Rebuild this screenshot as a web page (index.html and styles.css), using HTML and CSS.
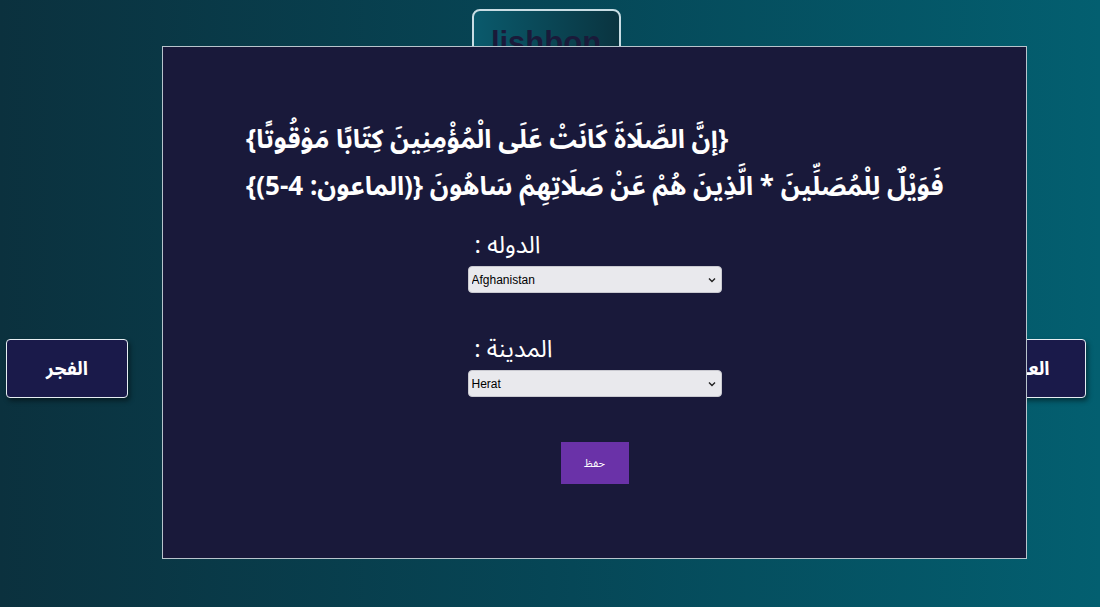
FILE: index.html
```html
<!DOCTYPE html>
<html lang="ar">
<head>
<meta charset="utf-8">
<link rel="stylesheet" href="styles.css">
</head>
<body>
<div class="page">
  <header class="top">
    <div class="city">lishbon</div>
  </header>
  <div class="prayers">
    <button class="prayer">الفجر</button>
    <button class="prayer">العصر</button>
  </div>
</div>
<div class="modal">
  <div class="verse">
    <p class="line">{إنَّ الصَّلَاةَ كَانَتْ عَلَى الْمُؤْمِنِينَ كِتَابًا مَوْقُوتًا}</p>
    <p class="line">فَوَيْلٌ لِلْمُصَلِّينَ * الَّذِينَ هُمْ عَنْ صَلَاتِهِمْ سَاهُونَ {(الماعون: 4-5)}</p>
  </div>
  <form class="form">
    <div class="field">
      <label class="label label-country">الدوله :</label>
      <div class="select-wrap">
        <select class="select"><option>Afghanistan</option></select>
        <svg class="chev" width="8" height="6" viewBox="0 0 8 6"><path d="M1 1.5 L4 4.5 L7 1.5" fill="none" stroke="#222" stroke-width="1.4"/></svg>
      </div>
    </div>
    <div class="field">
      <label class="label label-city">المدينة :</label>
      <div class="select-wrap">
        <select class="select"><option>Herat</option></select>
        <svg class="chev" width="8" height="6" viewBox="0 0 8 6"><path d="M1 1.5 L4 4.5 L7 1.5" fill="none" stroke="#222" stroke-width="1.4"/></svg>
      </div>
    </div>
    <button type="button" class="save">حفظ</button>
  </form>
</div>
</body>
</html>
```
FILE: styles.css
```css
* { box-sizing: border-box; }
html, body { margin: 0; height: 100%; }
body {
  background: linear-gradient(90deg, #0b313e 0%, #064656 50%, #035f70 100%);
  font-family: "Noto Sans Arabic", "DejaVu Sans", sans-serif;
  overflow: hidden;
}
.page {
  height: 607px;
  display: flex;
  flex-direction: column;
  align-items: center;
}
.top {
  padding-top: 9px;
  padding-right: 8px;
  display: flex;
  justify-content: center;
  width: 100%;
}
.city {
  width: 149px;
  height: 70px;
  border: 2px solid #c8dde4;
  border-radius: 8px;
  background: linear-gradient(90deg, #0a5a6c, #0a3440);
  color: #1a1a3a;
  font-family: "Liberation Sans", Arial, sans-serif;
  font-weight: bold;
  font-size: 31px;
  text-align: center;
  padding-top: 14px;
}
.prayers {
  margin-top: 260px;
  width: 100%;
  display: flex;
  justify-content: space-between;
  padding: 0 14px 0 6px;
}
.prayer {
  width: 122px;
  height: 59px;
  background: #1a1a4a;
  border: 1px solid #e6eef2;
  border-radius: 4px;
  box-shadow: 2px 3px 5px rgba(0,0,0,0.45);
  color: #fff;
  font-family: "Noto Sans Arabic", "DejaVu Sans", sans-serif;
  font-weight: bold;
  font-size: 19px;
}
.modal {
  position: absolute;
  left: 162px;
  top: 46px;
  width: 865px;
  height: 513px;
  background: #19193a;
  border: 1px solid #b8c4cc;
  display: flex;
  flex-direction: column;
  align-items: center;
  padding-top: 69px;
}
.verse {
  align-self: stretch;
  direction: rtl;
  padding-left: 83px;
  color: #fff;
  font-weight: bold;
  font-size: 26px;
}
.line {
  margin: 0;
  text-align: left;
  line-height: 47px;
  white-space: nowrap;
}
.form {
  margin-top: 21px;
  display: flex;
  flex-direction: column;
  align-items: center;
}
.field {
  width: 254px;
  display: flex;
  flex-direction: column;
  margin-bottom: 42px;
}
.label {
  color: #fff;
  font-size: 24px;
  direction: rtl;
  text-align: right;
  line-height: 30px;
  margin-bottom: 5px;
  white-space: nowrap;
}
.label-country { padding-right: 181px; }
.label-city { padding-right: 169px; }
.select-wrap {
  position: relative;
  width: 254px;
  height: 27px;
}
.select {
  display: block;
  appearance: none;
  -webkit-appearance: none;
  width: 254px;
  height: 27px;
  padding: 0 20px 0 3px;
  font-family: "Liberation Sans", Arial, sans-serif;
  font-size: 12px;
  background: #e9e9ed;
  border: 1px solid #c9c9d0;
  border-radius: 4px;
  color: #000;
}
.chev {
  position: absolute;
  right: 6px;
  top: 11px;
  pointer-events: none;
}
.save {
  margin-top: 3px;
  width: 68px;
  height: 42px;
  background: #6a32a8;
  border: none;
  color: #fff;
  font-size: 11px;
  font-family: "Noto Sans Arabic", "DejaVu Sans", sans-serif;
}
```
